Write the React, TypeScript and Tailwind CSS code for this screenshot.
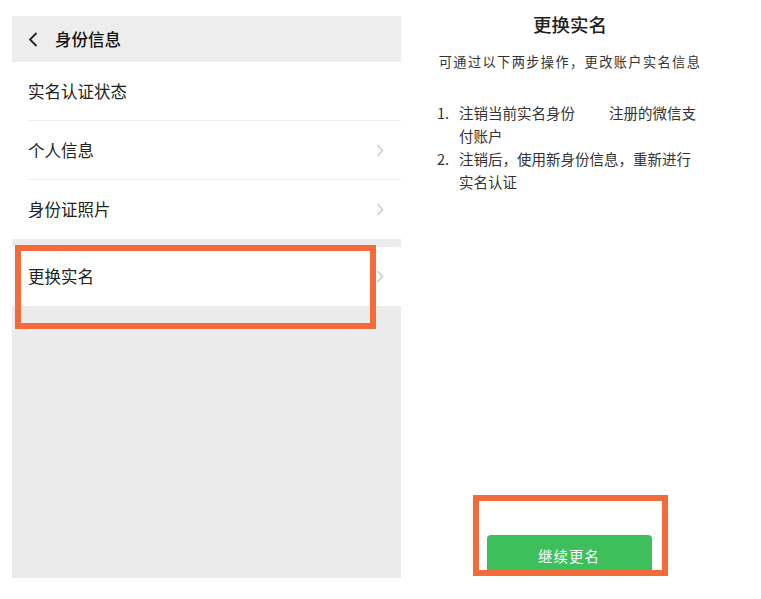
const font = { fontFamily: '"Noto Sans CJK SC", "Noto Sans", sans-serif' };

function Arrow() {
    return (
        <svg width="8" height="13" viewBox="0 0 8 13" fill="none" className="shrink-0">
            <polyline points="1.5,1 6.5,6.5 1.5,12" stroke="#c7c7c7" strokeWidth="1.3" />
        </svg>
    );
}

function Row({ label, arrow = true, divider = true }: { label: string; arrow?: boolean; divider?: boolean }) {
    return (
        <div className="bg-white pl-[16px]">
            <div className={`flex items-center h-[59px] pr-[17px] ${divider ? "border-b border-[#efefef]" : ""}`}>
                <span className="flex-1 text-[16.5px] text-[#222]">{label}</span>
                {arrow && <Arrow />}
            </div>
        </div>
    );
}

export default function App() {
    return (
        <div className="w-[761px] h-[599px] bg-white flex items-start pl-[12px]" style={font}>
            {/* Left: identity info list */}
            <div className="relative mt-[16px] w-[389px] h-[562px] bg-[#ebebeb] flex flex-col">
                <div className="h-[46px] bg-[#ededed] flex items-center pl-[16px] gap-[17px]">
                    <svg width="10" height="15" viewBox="0 0 10 15" fill="none" className="shrink-0">
                        <polyline points="8.5,1 2,7.5 8.5,14" stroke="#222" strokeWidth="1.8" />
                    </svg>
                    <span className="text-[16.5px] font-medium text-[#111]">身份信息</span>
                </div>
                <Row label="实名认证状态" arrow={false} />
                <Row label="个人信息" />
                <Row label="身份证照片" divider={false} />
                <div className="h-[8px]" />
                <Row label="更换实名" divider={false} />
                {/* highlight box */}
                <div className="absolute left-[3px] top-[229px] w-[361px] h-[84px] border-[6px] border-[#f26b38]" />
            </div>

            {/* Right: change real name */}
            <div className="w-[338px] h-[578px] flex flex-col items-center">
                <h2 className="mt-[12px] text-[18.5px] leading-[24px] font-medium text-[#222]">更换实名</h2>
                <p className="mt-[16px] text-[13.2px] leading-[20px] text-[#333] tracking-[1.4px]">可通过以下两步操作，更改账户实名信息</p>
                <ol className="mt-[29px] w-[266px] text-[14.5px] leading-[23px] text-[#333]">
                    <li className="flex">
                        <span className="w-[22px] shrink-0">1.</span>
                        <span>
                            注销当前实名身份<span className="inline-block w-[34px]" />注册的微信支
                            <br />
                            付账户
                        </span>
                    </li>
                    <li className="flex">
                        <span className="w-[22px] shrink-0">2.</span>
                        <span>
                            注销后，使用新身份信息，重新进行
                            <br />
                            实名认证
                        </span>
                    </li>
                </ol>
                <div className="flex-1" />
                <div className="mb-[2px] w-[195px] h-[81px] border-[6px] border-[#f26b38] overflow-hidden pt-[34px] pl-[8px]">
                    <button className="w-[165px] h-[42px] rounded-[4px] bg-[#3dbf5b] text-white text-[14.5px] tracking-[1px]">
                        继续更名
                    </button>
                </div>
            </div>
        </div>
    );
}
